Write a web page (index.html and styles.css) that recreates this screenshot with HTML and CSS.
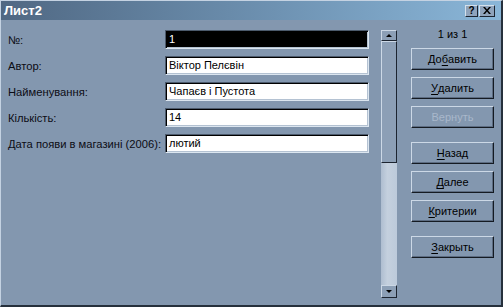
FILE: index.html
```html
<!DOCTYPE html>
<html>
  <head>
    <meta charset="utf-8">
    <link rel="stylesheet" href="styles.css">
  </head>
  <body>
    <div class="window">
      <div class="titlebar">
        <span class="title">Лист2</span>
        <div class="caption-btns">
          <span class="cbtn help">?</span>
          <span class="cbtn close">
            <svg width="8" height="7" viewBox="0 0 8 7"><path d="M0 0h2l2 2.5L6 0h2L5 3.5 8 7H6L4 4.5 2 7H0l3-3.5z" fill="#000"/></svg>
          </span>
        </div>
      </div>
      <div class="client">
        <div class="fields">
          <div class="lbl">№:</div>
          <div class="field selected">1</div>
          <div class="lbl">Автор:</div>
          <div class="field">Віктор Пелєвін</div>
          <div class="lbl">Найменування:</div>
          <div class="field">Чапаєв і Пустота</div>
          <div class="lbl">Кількість:</div>
          <div class="field">14</div>
          <div class="lbl">Дата появи в магазині (2006):</div>
          <div class="field">лютий</div>
        </div>
        <div class="scrollbar">
          <div class="sb-btn up"><span class="arr-up"></span></div>
          <div class="sb-thumb"></div>
          <div class="sb-track"></div>
          <div class="sb-btn down"><span class="arr-down"></span></div>
        </div>
        <div class="actions">
          <div class="counter">1 из 1</div>
          <div class="btn">До<u>б</u>авить</div>
          <div class="btn"><u>У</u>далить</div>
          <div class="btn disabled">Вернуть</div>
          <div class="btn gap"><u>Н</u>азад</div>
          <div class="btn"><u>Д</u>алее</div>
          <div class="btn"><u>К</u>ритерии</div>
          <div class="btn gap"><u>З</u>акрыть</div>
        </div>
      </div>
    </div>
  </body>
</html>
```

FILE: styles.css
```css
html, body {
  margin: 0;
  padding: 0;
  background: #8397af;
  overflow: hidden;
}
.window {
  width: 503px;
  height: 307px;
  box-sizing: border-box;
  background: #8397af;
  border-top: 1px solid #c4d2e2;
  border-left: 1px solid #c4d2e2;
  border-right: 2px solid #26303c;
  border-bottom: 2px solid #26303c;
  font-family: "Liberation Sans", Arial, sans-serif;
  font-size: 11px;
  color: #000;
}
.titlebar {
  height: 19px;
  display: flex;
  align-items: center;
  justify-content: space-between;
  background: linear-gradient(to right, #506883, #6e92b2 55%, #8ab6d8);
  padding: 0 6px 0 3px;
}
.title {
  color: #fff;
  font-weight: bold;
  font-size: 13px;
}
.caption-btns {
  display: flex;
  gap: 1px;
}
.cbtn {
  height: 12px;
  display: flex;
  align-items: center;
  justify-content: center;
  background: #8fa3bb;
  border-top: 1px solid #d4e0ec;
  border-left: 1px solid #d4e0ec;
  border-right: 1px solid #1c2430;
  border-bottom: 1px solid #1c2430;
  box-sizing: border-box;
}
.help {
  width: 13px;
  font-weight: bold;
  font-size: 10px;
}
.close {
  width: 16px;
}
.client {
  display: flex;
  padding: 10px 0 0 7px;
}
.fields {
  display: grid;
  grid-template-columns: 157px 204px;
  grid-auto-rows: 19px;
  row-gap: 7px;
}
.lbl {
  display: flex;
  align-items: center;
  white-space: nowrap;
  color: #0c0c14;
  font-size: 11.2px;
}
.field {
  box-sizing: border-box;
  background: #fff;
  border-top: 1px solid #4c5a6c;
  border-left: 1px solid #4c5a6c;
  border-right: 1px solid #dce6f0;
  border-bottom: 1px solid #dce6f0;
  box-shadow: inset 1px 1px 0 #000, inset -1px -1px 0 #b4c2d2;
  padding: 0 3px;
  line-height: 17px;
  white-space: nowrap;
}
.field.selected {
  background: #000;
  color: #fff;
}
.scrollbar {
  margin-left: 12px;
  width: 16px;
  height: 268px;
  display: flex;
  flex-direction: column;
}
.sb-btn, .sb-thumb {
  box-sizing: border-box;
  background: #8c9fb6;
  border-top: 1px solid #ccd8e6;
  border-left: 1px solid #ccd8e6;
  border-right: 1px solid #1c2430;
  border-bottom: 1px solid #1c2430;
  display: flex;
  align-items: center;
  justify-content: center;
}
.sb-btn.up {
  height: 11px;
}
.sb-thumb {
  height: 122px;
}
.sb-track {
  flex: 1;
  background: linear-gradient(to right, #aebdd0, #c4d0de 40%, #bccadb);
}
.sb-btn.down {
  height: 13px;
}
.arr-up {
  width: 0;
  height: 0;
  border-left: 3px solid transparent;
  border-right: 3px solid transparent;
  border-bottom: 3px solid #000;
}
.arr-down {
  width: 0;
  height: 0;
  border-left: 3px solid transparent;
  border-right: 3px solid transparent;
  border-top: 3px solid #000;
}
.actions {
  margin-left: 14px;
  width: 83px;
  display: flex;
  flex-direction: column;
}
.counter {
  text-align: center;
  line-height: 12px;
  margin-top: -2px;
  margin-bottom: 8px;
}
.btn {
  box-sizing: border-box;
  height: 22px;
  margin-bottom: 7px;
  display: flex;
  align-items: center;
  justify-content: center;
  background: #8397af;
  border-top: 1px solid #ccd8e6;
  border-left: 1px solid #ccd8e6;
  border-right: 1px solid #141a22;
  border-bottom: 1px solid #141a22;
  box-shadow: inset -1px -1px 0 #5c6c82;
}
.btn u {
  text-decoration-skip-ink: none;
  text-underline-offset: 2px;
}
.btn.gap {
  margin-top: 7px;
}
.btn.disabled {
  color: #a9b8cb;
}
```
